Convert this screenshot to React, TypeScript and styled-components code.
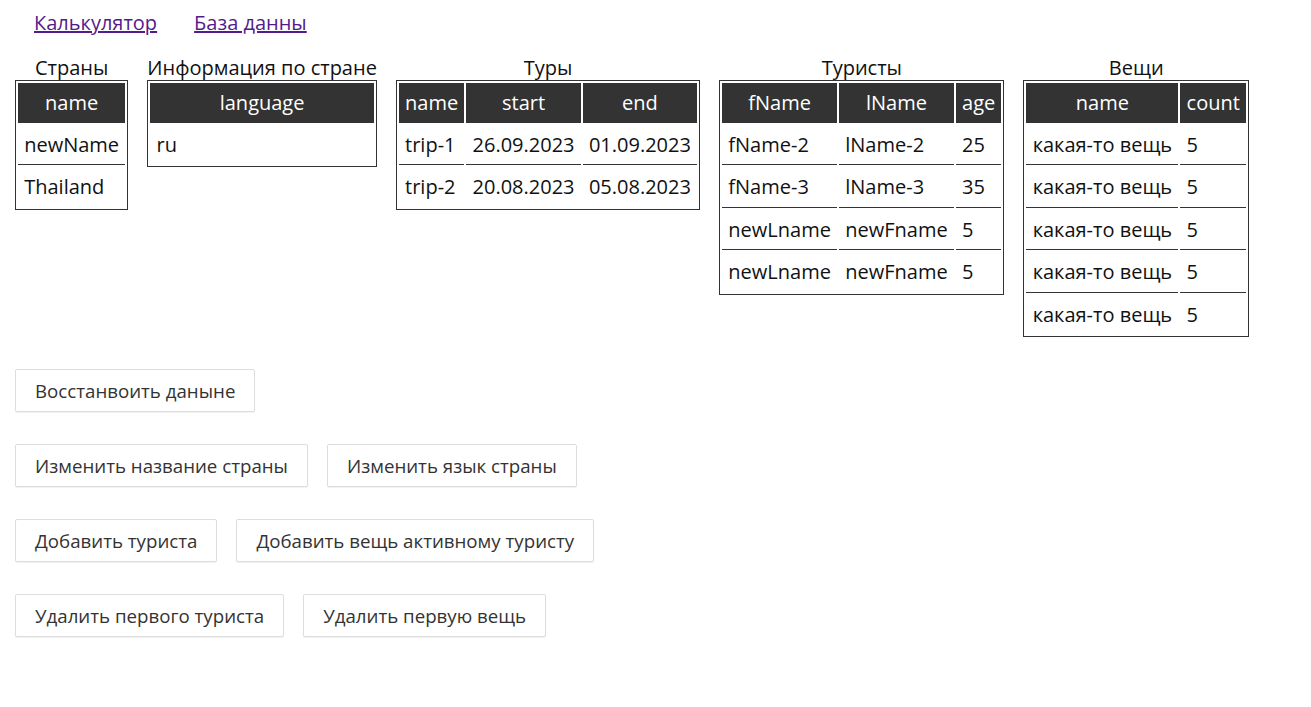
import React from 'react';
import styled, { createGlobalStyle } from 'styled-components';

const GlobalStyle = createGlobalStyle`
  body {
    margin: 0;
    font-family: 'Open Sans', 'Liberation Sans', sans-serif;
    color: #111;
    background: #fff;
  }
`;

const Page = styled.div`
  padding: 9px 15px 15px;
`;

const Nav = styled.nav`
  display: flex;
  gap: 37px;
  padding-left: 19px;
  margin-bottom: 20px;
  a {
    font-size: 20px;
    color: #551a8b;
    text-decoration: underline;
  }
`;

const Tables = styled.div`
  display: flex;
  align-items: flex-start;
  gap: 19px;
`;

const Table = styled.table`
  border: 1px solid #333;
  border-spacing: 2px;
  font-size: 20px;
  caption {
    font-size: 20px;
    line-height: 24px;
    white-space: nowrap;
  }
  th {
    background: #333;
    color: #fff;
    font-weight: 400;
    padding: 6.25px 6.2px;
  }
  td {
    padding: 6.25px 6.2px;
    border-bottom: 1px solid #333;
    text-align: left;
    white-space: nowrap;
  }
  tr:last-child td {
    border-bottom: none;
  }
`;

const Actions = styled.div`
  display: flex;
  flex-direction: column;
  gap: 32px;
  margin-top: 32px;
`;

const ActionRow = styled.div`
  display: flex;
  gap: 19px;
`;

const Button = styled.button`
  font-family: 'Open Sans', 'Liberation Sans', sans-serif;
  font-size: 18.7px;
  line-height: 25px;
  color: #333;
  background: #fff;
  border: 1px solid #ddd;
  border-radius: 2px;
  padding: 8px 19px;
  box-shadow: 0 1px 1px rgba(0, 0, 0, 0.06);
  cursor: pointer;
`;

interface DataTableProps {
  caption: string;
  head: string[];
  rows: (string | number)[][];
}

const DataTable: React.FC<DataTableProps> = ({ caption, head, rows }) => (
  <Table>
    <caption>{caption}</caption>
    <thead>
      <tr>
        {head.map(h => (
          <th key={h}>{h}</th>
        ))}
      </tr>
    </thead>
    <tbody>
      {rows.map((r, i) => (
        <tr key={i}>
          {r.map((c, j) => (
            <td key={j}>{c}</td>
          ))}
        </tr>
      ))}
    </tbody>
  </Table>
);

const things = Array.from({ length: 5 }, () => ['какая-то вещь', 5]);

export default function App() {
  return (
    <Page>
      <GlobalStyle />
      <Nav>
        <a href="#calc">Калькулятор</a>
        <a href="#db">База данны</a>
      </Nav>
      <Tables>
        <DataTable caption="Страны" head={['name']} rows={[['newName'], ['Thailand']]} />
        <DataTable caption="Информация по стране" head={['language']} rows={[['ru']]} />
        <DataTable
          caption="Туры"
          head={['name', 'start', 'end']}
          rows={[
            ['trip-1', '26.09.2023', '01.09.2023'],
            ['trip-2', '20.08.2023', '05.08.2023'],
          ]}
        />
        <DataTable
          caption="Туристы"
          head={['fName', 'lName', 'age']}
          rows={[
            ['fName-2', 'lName-2', 25],
            ['fName-3', 'lName-3', 35],
            ['newLname', 'newFname', 5],
            ['newLname', 'newFname', 5],
          ]}
        />
        <DataTable caption="Вещи" head={['name', 'count']} rows={things} />
      </Tables>
      <Actions>
        <ActionRow>
          <Button>Восстанвоить даныне</Button>
        </ActionRow>
        <ActionRow>
          <Button>Изменить название страны</Button>
          <Button>Изменить язык страны</Button>
        </ActionRow>
        <ActionRow>
          <Button>Добавить туриста</Button>
          <Button>Добавить вещь активному туристу</Button>
        </ActionRow>
        <ActionRow>
          <Button>Удалить первого туриста</Button>
          <Button>Удалить первую вещь</Button>
        </ActionRow>
      </Actions>
    </Page>
  );
}
